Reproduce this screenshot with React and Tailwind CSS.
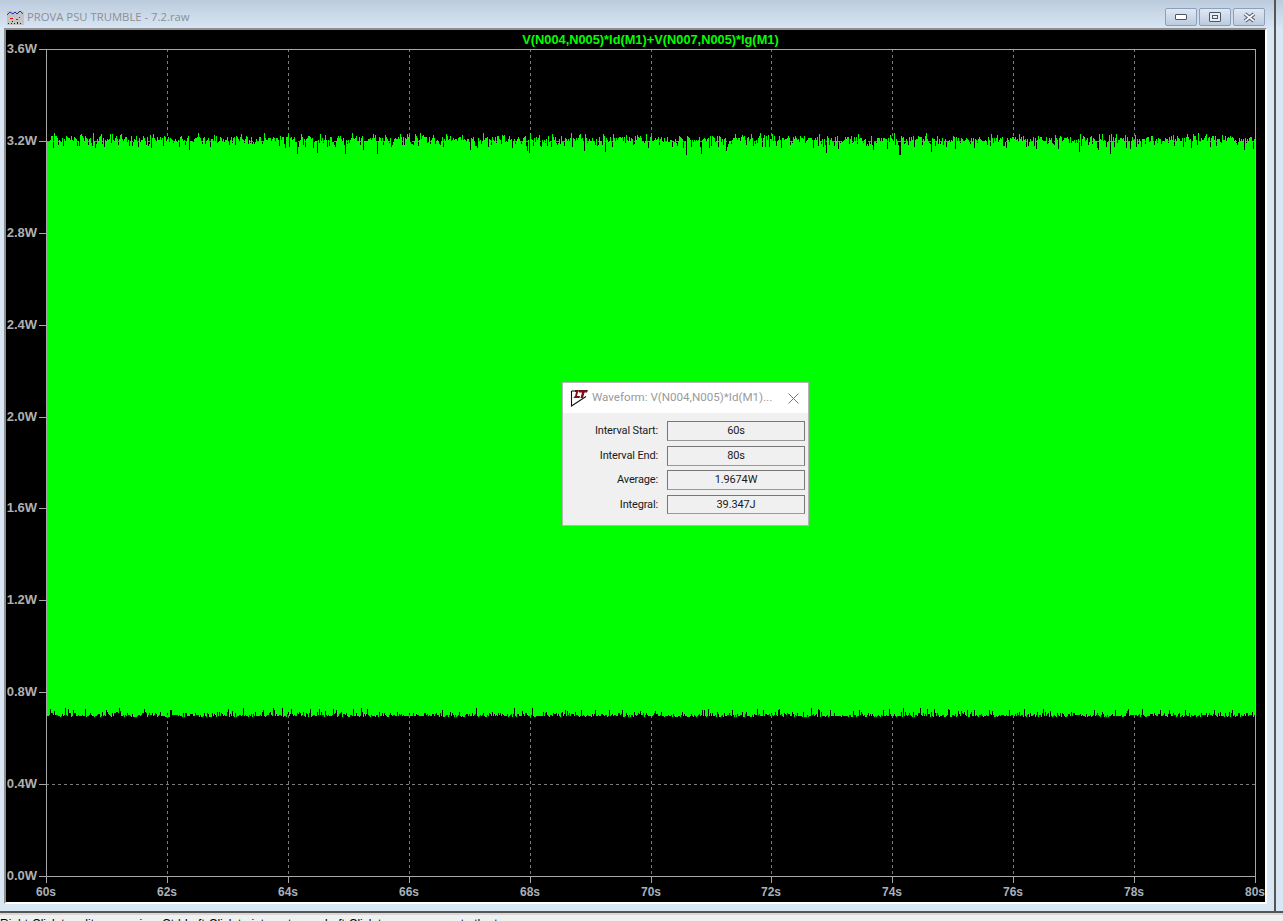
const yTicks = ["3.6W", "3.2W", "2.8W", "2.4W", "2.0W", "1.6W", "1.2W", "0.8W", "0.4W", "0.0W"]
const xTicks = ["60s", "62s", "64s", "66s", "68s", "70s", "72s", "74s", "76s", "78s", "80s"]

// plot box, relative to the black panel
const LEFT = 40
const RIGHT = 1249
const TOP = 19
const BOTTOM = 846
const yAt = (i) => TOP + ((BOTTOM - TOP) * i) / 9
const xAt = (i) => LEFT + ((RIGHT - LEFT) * i) / 10

// seeded so the noise is the same every load
function makeWave() {
  let seed = 74219
  const rnd = () => {
    seed = (seed * 16807) % 2147483647
    return seed / 2147483647
  }
  const top = []
  const bottom = []
  for (let x = LEFT; x <= RIGHT; x++) {
    const t = rnd()
    let yt = 106 + rnd() * 6
    if (t > 0.97) yt = 116 + rnd() * 9
    else if (t > 0.75) yt = 111 + rnd() * 7
    else if (t < 0.06) yt = 103 + rnd() * 3
    top.push(yt)
    const b = rnd()
    let yb = 687 - rnd() * 2
    if (b > 0.93) yb = 681 - rnd() * 3
    else if (b > 0.65) yb = 685 - rnd() * 3
    bottom.push(yb)
  }
  let d = `M${LEFT} ${bottom[0]}`
  top.forEach((y, i) => {
    d += `V${y.toFixed(0)}H${LEFT + i + 1}`
  })
  for (let i = bottom.length - 1; i >= 0; i--) {
    d += `V${bottom[i].toFixed(0)}H${LEFT + i}`
  }
  return d + "Z"
}

const wave = makeWave()

function Plot() {
  return (
    <svg width="1259" height="872" className="block" shapeRendering="crispEdges">
      {yTicks.map((_, i) => {
        const y = Math.round(yAt(i)) + 0.5
        return (
          <g key={i}>
            <line x1={LEFT - 7} x2={LEFT} y1={y} y2={y} stroke="#a6a6a6" />
            {i > 0 && i < 9 && (
              <line x1={LEFT} x2={RIGHT} y1={y} y2={y} stroke="#7a7a7a" strokeDasharray="3 3" />
            )}
          </g>
        )
      })}
      {xTicks.map((_, i) => {
        const x = Math.round(xAt(i)) + 0.5
        return (
          <g key={i}>
            <line x1={x} x2={x} y1={BOTTOM} y2={BOTTOM + 7} stroke="#a6a6a6" />
            {i > 0 && i < 10 && (
              <line x1={x} x2={x} y1={TOP} y2={BOTTOM} stroke="#7a7a7a" strokeDasharray="3 3" />
            )}
          </g>
        )
      })}
      <path d={wave} fill="#00ff00" />
      <rect x={LEFT + 0.5} y={TOP + 0.5} width={RIGHT - LEFT} height={BOTTOM - TOP} fill="none" stroke="#a6a6a6" />
    </svg>
  )
}

function WaveIcon() {
  return (
    <svg width="17" height="17" viewBox="0 0 17 17" shapeRendering="crispEdges">
      <rect x="0" y="2" width="17" height="14" fill="#c4c4c4" />
      <path d="M0 6L3 3L6 5L8 3L10 5L13 2L16 5" fill="none" stroke="#1c2fd0" strokeWidth="1" shapeRendering="auto" />
      <path d="M3 9H6M9 10H11M12 8H13" stroke="#e01010" />
      <path d="M1 14H16" stroke="#222" strokeDasharray="1 2" />
      <path d="M5 12H6M10 13H11" stroke="#222" />
    </svg>
  )
}

function LtIcon() {
  return (
    <svg width="18" height="18" viewBox="0 0 18 18">
      <path d="M1.5 2V17L16 7.5" fill="none" stroke="#111" strokeWidth="1.1" />
      <path d="M1.5 2H5" fill="none" stroke="#111" strokeWidth="1.1" />
      <path d="M5 1H9L8.5 3H8L7 7H10L9.5 9H3.5L4 7.5H5L6 3H5Z" fill="#7a0f18" />
      <path d="M9 1H18L17 3.5H14.5L13 9H10.5L12 3.5H9Z" fill="#7a0f18" />
    </svg>
  )
}

function WinButton({ children }) {
  return (
    <div className="flex h-[18px] w-[32px] items-center justify-center rounded-[2px] border border-[#8e9fbb] bg-gradient-to-b from-[#dfe8f3] to-[#bccbde]">
      {children}
    </div>
  )
}

function Field({ label, value, h }) {
  return (
    <div className={`flex items-center ${h}`}>
      <div className="w-[86px] pt-px text-right font-['Roboto',sans-serif] text-[11px] tracking-[-0.15px] text-[#1a1a1a]">{label}</div>
      <div className="ml-[9px] flex h-full w-[138px] items-center justify-center border border-[#777] border-b-[#999] pt-px font-['Roboto',sans-serif] text-[11px] tracking-[-0.15px] text-[#1a1a1a]">
        {value}
      </div>
    </div>
  )
}

export default function App() {
  return (
    <div className="flex h-[921px] w-[1283px] flex-col overflow-hidden bg-[#f0f0f0] font-['Liberation_Sans',Arial,sans-serif]">
      <div className="flex h-[913px] border-b-2 border-[#555] bg-[#d9e6f3]">
        <div className="flex w-[1276px] flex-col border-r-2 border-[#555]">
          {/* title bar */}
          <div className="flex h-[28px] items-center bg-gradient-to-b from-[#bccbdc] to-[#d8e5f3] pl-[7px] pr-[9px] pt-[6px]">
            <WaveIcon />
            <span className="ml-[3px] font-['Open_Sans',sans-serif] text-[11.3px] text-[#8b9097]">PROVA PSU TRUMBLE - 7.2.raw</span>
            <div className="ml-auto flex gap-[2px]">
              <WinButton>
                <div className="h-[6px] w-[12px] rounded-[1px] border border-[#4c5564] bg-white" />
              </WinButton>
              <WinButton>
                <div className="flex h-[10px] w-[12px] items-center justify-center rounded-[1px] border border-[#4c5564] bg-[#e8eef5]">
                  <div className="h-[4px] w-[6px] border border-[#4c5564]" />
                </div>
              </WinButton>
              <WinButton>
                <svg width="13" height="11" viewBox="0 0 13 11">
                  <path d="M2 2L11 9M11 2L2 9" stroke="#4c5564" strokeWidth="3.6" />
                  <path d="M2 2L11 9M11 2L2 9" stroke="#f4f6f9" strokeWidth="1.8" />
                </svg>
              </WinButton>
            </div>
          </div>

          {/* graph pane */}
          <div className="ml-[4px] self-start border-2 border-t-[#8f8f8f] border-l-[#8f8f8f] border-r-white border-b-white">
            <div className="relative h-[872px] w-[1259px] overflow-hidden bg-black">
              <Plot />
              <div className="absolute left-0 top-[1px] w-full pl-[30px] text-center text-[12.8px] font-bold leading-[17px] text-[#00ff00]">
                V(N004,N005)*Id(M1)+V(N007,N005)*Ig(M1)
              </div>
              {yTicks.map((t, i) => (
                <div
                  key={t}
                  className="absolute left-0 w-[31px] text-right text-[13px] font-bold leading-[14px] text-[#b0b0b0]"
                  style={{ top: Math.round(yAt(i)) - 7 }}
                >
                  {t}
                </div>
              ))}
              {xTicks.map((t, i) => (
                <div
                  key={t}
                  className="absolute w-[40px] text-center text-[12px] font-bold leading-[14px] text-[#a8b0b8]"
                  style={{ left: Math.round(xAt(i)) - 20, top: BOTTOM + 9 }}
                >
                  {t}
                </div>
              ))}

              {/* waveform dialog */}
              <div className="absolute left-[556px] top-[352px] h-[144px] w-[247px] border border-[#b5b5b5] bg-[#f0f0f0]">
                <div className="flex h-[30px] items-center bg-white pl-[7px] pr-[7px]">
                  <LtIcon />
                  <span className="ml-[4px] font-['Roboto',sans-serif] text-[11.6px] text-[#9a9a9a]">Waveform: V(N004,N005)*Id(M1)...</span>
                  <svg width="11" height="11" viewBox="0 0 11 11" className="ml-auto mr-[2px]">
                    <path d="M0.5 0.5L10.5 10.5M10.5 0.5L0.5 10.5" stroke="#777" />
                  </svg>
                </div>
                <div className="flex flex-col gap-[5px] pt-[8px] pl-[9px]">
                  <Field label="Interval Start:" value="60s" h="h-[20px]" />
                  <Field label="Interval End:" value="80s" h="h-[20px]" />
                  <Field label="Average:" value="1.9674W" h="h-[20px] -mt-px" />
                  <Field label="Integral:" value="39.347J" h="h-[19px]" />
                </div>
              </div>
            </div>
          </div>
        </div>
        <div className="flex-1">
          <div className="h-[28px] bg-gradient-to-b from-[#bccbdc] to-[#d8e5f3]" />
        </div>
      </div>

      {/* status bar, mostly cut off by the bottom of the screenshot */}
      <div className="flex-1 overflow-hidden border-t-2 border-[#d8d8d8] pt-[2px]">
        <div className="whitespace-pre text-[12px] leading-[14px] text-black">
          {"Right-Click to edit expression. Ctrl-Left-Click to integrate.       Left-Click to move cursor to the trace."}
        </div>
      </div>
    </div>
  )
}
